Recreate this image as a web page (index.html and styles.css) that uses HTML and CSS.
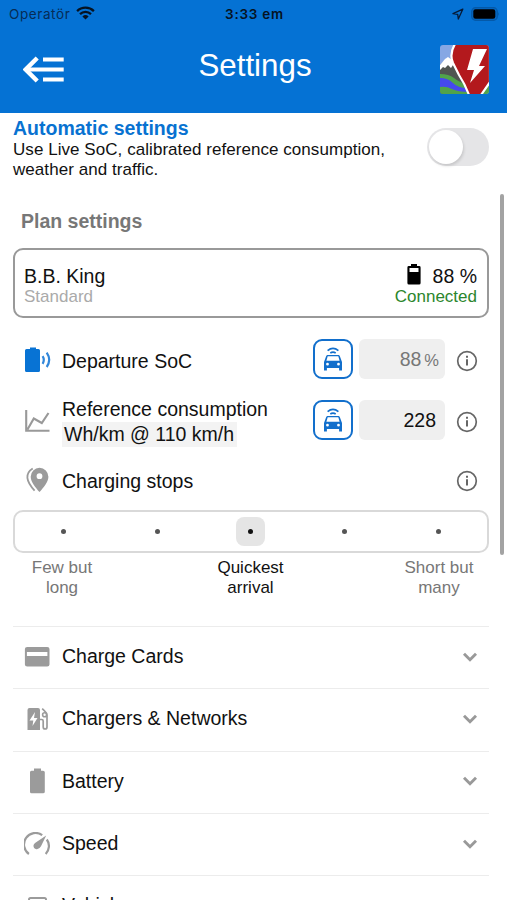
FILE: index.html
```html
<!DOCTYPE html>
<html lang="en">
<head>
<meta charset="utf-8">
<title>Settings</title>
<link rel="stylesheet" href="styles.css">
</head>
<body>
<svg class="defs" width="0" height="0" aria-hidden="true">
  <symbol id="info" viewBox="0 0 22 22"><circle cx="11" cy="11" r="9.3" fill="none" stroke="#666" stroke-width="1.7"/><path d="M11 9.3v6.2M11 5.8v2" stroke="#666" stroke-width="2"/></symbol>
  <symbol id="car" viewBox="0 0 20 26"><path fill="none" stroke="currentColor" stroke-width="1.7" d="M4.6 4.6Q10 .2 15.400 4.600M7.300 7q2.700-1.600 5.400 0"/><path fill="currentColor" fill-rule="evenodd" d="M4.300 9h11.400l1 .7L19 16v8.600h-2.900V22H3.900v2.600H1V16l2.300-6.300zM4.700 10.300 3.400 14.800h13.200l-1.300-4.500zM4.500 16.800a1.400 1.400 0 1 0 0 2.800 1.400 1.400 0 0 0 0-2.800m11 0a1.400 1.400 0 1 0 0 2.800 1.400 1.400 0 0 0 0-2.800"/></symbol>
  <symbol id="chevron" viewBox="0 0 16 12"><path d="m2 2.800 6 5.900 6-5.900" fill="none" stroke="#999" stroke-width="2.900"/></symbol>
</svg>
<header class="header">
  <div class="status">
    <span class="carrier">Operatör
      <svg width="19" height="14" viewBox="0 0 19 14"><path d="M1.1 5.1a12 12 0 0 1 16.800 0M4 8.100a8 8 0 0 1 11 0" fill="none" stroke="#061322" stroke-width="2.300"/><path d="M6.400 10.500a4.500 4.500 0 0 1 6.200 0L9.500 13.600z" fill="#061322"/></svg>
    </span>
    <span class="time">3:33 em</span>
    <span class="indicators">
      <svg width="12" height="12" viewBox="0 0 12 12"><path d="M10.800 1.200 1 5.700l4.700.6.6 4.700z" fill="none" stroke="#061a36" stroke-width="1.300" stroke-linejoin="round"/></svg>
      <svg width="29" height="14" viewBox="0 0 29 14"><rect x=".7" y=".7" width="25.600" height="12.600" rx="3.800" fill="#0567c2" stroke="#0459a8" stroke-width="1.200"/><rect x="2.300" y="2.300" width="22" height="9.400" rx="2.200" fill="#000"/><path d="M27.200 5q1.700 2 0 4z" fill="#0459a8"/></svg>
    </span>
  </div>
  <div class="navbar">
    <svg class="back" width="42" height="27" viewBox="0 0 42 27"><path d="M20 3.400h20.700M4 13.500h36.700M20 23.600h20.700" fill="none" stroke="#fff" stroke-width="4"/><path d="M14.200 2 2.700 13.500 14.200 25" fill="none" stroke="#fff" stroke-width="4.400"/></svg>
    <h1>Settings</h1>
    <svg class="logo" width="49" height="49" viewBox="0 0 49 49">
      <clipPath id="tile"><rect width="49" height="49" rx="3"/></clipPath>
      <g clip-path="url(#tile)">
        <path d="M0 0h49v49H0z" fill="#86a7e4"/>
        <path d="M0 20 7 13l5 2 10 10 8 24H0z" fill="#505551"/>
        <path d="m0 20 5-6 3-2 4 3 4 7-3-2-2 3-3-3-3 3-2-1-3 3z" fill="#fff"/>
        <path d="M0 29q9 0 14 4t14 7v9H0z" fill="#51a34b"/>
        <path d="M0 33q8 0 13 5t14 5l2 4q-11 0-17-3T0 42z" fill="#4648ee"/>
        <path d="M37 49l12-13v13z" fill="#51a34b"/>
        <path d="M15-1q-6 10-2 19l6 12q6 9 10 20h12l9-13V-1z" fill="#b3191d" stroke="#fff" stroke-width="2.200"/>
        <path d="M33 4h14l-8 17h6L30 38l4-13h-7z" fill="#fff"/>
      </g>
    </svg>
  </div>
</header>
<main>
  <section class="automatic">
    <div><h2>Automatic settings</h2><p>Use Live SoC, calibrated reference consumption,<br>weather and traffic.</p></div>
    <div class="toggle"><i></i></div>
  </section>
  <h3>Plan settings</h3>
  <section class="vehicle">
    <div><div class="name">B.B. King</div><div class="model">Standard</div></div>
    <div class="charge">
      <div class="level"><svg width="14" height="21" viewBox="0 0 14 21"><path fill-rule="evenodd" d="M4 0h6v2h2.200q1.400 0 1.400 1.400V19q0 1.500-1.500 1.500H1.900Q.4 20.500.4 19V3.400Q.4 2 1.800 2H4zM2.500 4v4h9V4z"/></svg>88 %</div>
      <div class="connected">Connected</div>
    </div>
  </section>
  <section class="row departure">
    <svg class="icon" width="27" height="26" viewBox="0 0 27 26"><path fill="#0873d4" d="M6 .5h6V2h2.500q1.500 0 1.500 1.500v20q0 1.500-1.500 1.500h-12Q1 25 1 23.500v-20Q1 2 2.500 2H6z"/><path d="M18.600 9.200q2.400 3.800 0 7.600M22.700 5.600q5 7.200 0 14.400" fill="none" stroke="#3187da" stroke-width="2.200"/></svg>
    <div class="label">Departure SoC</div>
    <div class="live"><svg width="20" height="26"><use href="#car"/></svg></div>
    <div class="value muted">88<small>%</small></div>
    <svg class="info" width="22" height="22"><use href="#info"/></svg>
  </section>
  <section class="row reference">
    <svg class="icon" width="27" height="24" viewBox="0 0 27 24"><path d="M2.200 1v20.800h23.300M3.500 20.500 9.800 9.500l8 4.500L24.500 4" fill="none" stroke="#999" stroke-width="2.100"/></svg>
    <div class="label">Reference consumption<br><span>Wh/km @ 110 km/h</span></div>
    <div class="live"><svg width="20" height="26"><use href="#car"/></svg></div>
    <div class="value">228</div>
    <svg class="info" width="22" height="22"><use href="#info"/></svg>
  </section>
  <section class="row stops">
    <svg class="icon" width="27" height="26" viewBox="0 0 27 26"><path fill="#9b9b9b" fill-rule="evenodd" d="M15.500.8a8.900 8.900 0 0 1 8.900 8.900c0 5.500-5 11-8.900 15.300C11.700 20.700 6.700 15.200 6.700 9.700A8.900 8.900 0 0 1 15.500.8m0 5.500a2.900 2.900 0 1 0 0 5.800 2.900 2.900 0 0 0 0-5.800"/><path d="M8.700 1.500C.7 6.500 1.900 14.200 10.600 23.600" fill="none" stroke="#9b9b9b" stroke-width="1.800"/></svg>
    <div class="label">Charging stops</div>
    <svg class="info" width="22" height="22"><use href="#info"/></svg>
  </section>
  <div class="slider"><div><i></i></div><div><i></i></div><div class="selected"><i></i></div><div><i></i></div><div><i></i></div></div>
  <div class="captions"><span>Few but<br>long</span><span class="active">Quickest<br>arrival</span><span>Short but<br>many</span></div>
  <nav class="menu">
    <div class="item"><svg class="icon" width="26" height="22" viewBox="0 0 26 22"><path fill="#9b9b9b" fill-rule="evenodd" d="M3.200 1h20q2.300 0 2.300 2v15.500q0 2-2.300 2h-20Q.9 20.500.9 18.500V3Q.9 1 3.200 1M2.900 6v4h20.500V6z"/></svg><b>Charge Cards</b><svg width="16" height="12"><use href="#chevron"/></svg></div>
    <div class="item"><svg class="icon" width="26" height="24" viewBox="0 0 26 24"><path fill="#9b9b9b" fill-rule="evenodd" d="M5.500 1H14q2 0 2 2v20H3.500V3q0-2 2-2M11 5l-5.500 8.500h3.800L8.500 19l5-8H10z"/><path d="M16 12.500h1.700q1.500 0 1.500 1.500v6q0 2 1.900 2t1.900-2V8.500Q23 6 21 4.300L18.200 1.700" fill="none" stroke="#9b9b9b" stroke-width="1.700"/><circle cx="20.600" cy="7.800" r="2" fill="none" stroke="#9b9b9b" stroke-width="1.600"/></svg><b>Chargers &amp; Networks</b><svg width="16" height="12"><use href="#chevron"/></svg></div>
    <div class="item"><svg class="icon" width="26" height="26" viewBox="0 0 26 26"><path fill="#9b9b9b" d="M10 .5h7V2.700h2q1.800 0 1.800 1.500v19.600q0 1.500-1.800 1.500H7.500Q6 25.300 6 23.800V4.200q0-1.500 1.500-1.500H10z"/></svg><b>Battery</b><svg width="16" height="12"><use href="#chevron"/></svg></div>
    <div class="item"><svg class="icon" width="26" height="24" viewBox="0 0 26 24"><path d="M4.900 22A11.300 11.300 0 0 1 18.200 3.100M22.800 7.500A11.300 11.300 0 0 1 21.700 22" fill="none" stroke="#9b9b9b" stroke-width="2.200"/><path fill="#9b9b9b" d="M22.200 3.500 17 14.300q-1.700 3.200-4.500 2.900-3.300-.7-3-4 .2-1.500 1.900-2.500z"/></svg><b>Speed</b><svg width="16" height="12"><use href="#chevron"/></svg></div>
    <div class="item"><svg class="icon" width="26" height="20" viewBox="0 0 26 20"><path d="M5 18V3.500Q5 2 6.500 2h14Q22 2 22 3.500V18M5 8h17" fill="none" stroke="#9b9b9b" stroke-width="2"/></svg><b>Vehicle</b><svg width="16" height="12"><use href="#chevron"/></svg></div>
  </nav>
</main>
<div class="scrollbar"></div>
</body>
</html>
```
FILE: styles.css
```css
* { box-sizing: border-box; }
body { margin: 0; height: 900px; overflow: hidden; background: #fff; color: #111; font: 19.5px/24px "Liberation Sans", Arial, sans-serif; position: relative; }
svg { flex: none; display: block; }
.defs { position: absolute; }
h1, h2, h3, p { margin: 0; }
.header { height: 113px; background: #0572d4; }
.status { height: 27px; display: grid; grid-template-columns: 1fr auto 1fr; align-items: center; padding: 0 7px 0 9px; color: #061322; font: 13.5px/26px Inter, sans-serif; }
.carrier { display: flex; align-items: center; gap: 6px; letter-spacing: .6px; color: #062c56; }
.carrier svg { margin-top: -2px; }
.time { font-weight: 600; font-size: 13.5px; letter-spacing: .75px; }
.indicators { display: flex; align-items: center; justify-content: flex-end; gap: 7px; }
.navbar { height: 85px; display: grid; grid-template-columns: 1fr auto 1fr; align-items: center; padding: 0 18px 0 23px; }
.navbar h1 { color: #fff; font-size: 31.3px; font-weight: 400; line-height: 36px; margin: 0 2px 7px 0; }
.logo { justify-self: end; margin-bottom: 1px; }
.back { margin-bottom: 1px; }
main { padding: 0 18px 0 13px; }
.automatic { height: 94px; padding-top: 4px; display: flex; justify-content: space-between; }
.automatic h2 { font-size: 19.5px; line-height: 23px; color: #0872d1; }
.automatic p { font-size: 17px; line-height: 19.5px; letter-spacing: .055px; white-space: nowrap; }
.toggle { width: 62px; height: 38px; margin-top: 11px; border-radius: 19px; background: #e5e5e7; padding: 2px; }
.toggle i { display: block; width: 34px; height: 34px; border-radius: 50%; background: #fff; box-shadow: 1px 2px 3px #0002; }
h3 { padding-left: 8px; height: 41px; color: #777; font-size: 19.5px; line-height: 28px; }
.vehicle { height: 70px; border: 2px solid #999; border-radius: 10px; padding: 14px 10px 0 9px; display: flex; justify-content: space-between; line-height: 24px; }
.model, .connected { font-size: 17px; line-height: 20px; margin-top: -1px; color: #aaa; }
.charge { text-align: right; }
.level { display: flex; justify-content: flex-end; align-items: center; gap: 12px; }
.level svg { margin-top: -3px; }
.connected { color: #2b862d; }
.row { display: flex; align-items: center; padding: 0 11px; }
.row .icon { margin-right: 11px; margin-top: -2px; }
.label { flex: 1; white-space: nowrap; }
.departure { height: 61px; margin-top: 12px; }
.departure .value, .departure .live { margin-top: -3px; }
.reference { height: 61px; }
.reference .label { line-height: 25px; }
.reference .label span { background: #f3f3f3; padding: 1px 3px 2px 2px; }
.reference .live, .reference .value { margin-top: -3px; }
.stops { height: 58px; }
.stops .label, .stops .info { margin-top: -1px; }
.live { width: 40px; height: 40px; border: 2px solid #126fcc; border-radius: 9px; color: #126fcc; display: grid; place-items: center; margin-right: 6px; }
.value { width: 86px; height: 40px; border-radius: 6px; background: #efefef; line-height: 40px; padding-right: 9px; text-align: right; margin-right: 11px; }
.muted { color: #777; padding-right: 6px; }
.muted small { font-size: 16.5px; margin-left: 3px; }
.slider { height: 43px; border: 2px solid #d9d9d9; border-radius: 10px; display: grid; grid-template-columns: repeat(5, 1fr); place-items: center; padding: 0 2px; }
.slider div { width: 29px; height: 29px; display: grid; place-items: center; border-radius: 8px; }
.slider i { width: 5px; height: 5px; border-radius: 50%; background: #555; }
.slider .selected { background: #e5e5e5; }
.slider .selected i { background: #111; }
.captions { height: 73px; padding-top: 5px; display: grid; grid-template-columns: 98px 1fr 98px; text-align: center; font-size: 17px; line-height: 20px; color: #777; margin-right: 1px; }
.captions .active { color: #111; }
.item { height: 62.3px; border-top: 1px solid #ececec; display: flex; align-items: center; padding: 0 11px 2px; }
.item .icon { margin-right: 12px; }
.item b { flex: 1; font-weight: 400; margin-top: -1px; }
.scrollbar { position: absolute; left: 500px; top: 194px; width: 4px; height: 361px; border-radius: 2px; background: #a3a3a3; }
```
